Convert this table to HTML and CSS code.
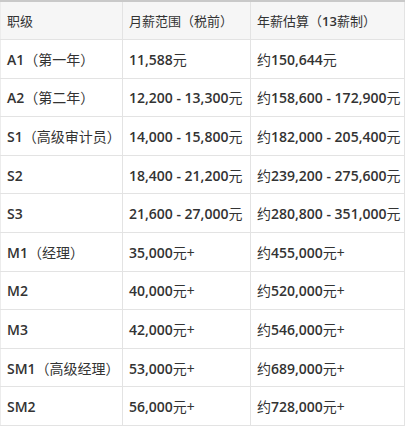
FILE: index.html
```html
<!DOCTYPE html>
<html lang="zh-CN">
<head>
<meta charset="utf-8">
<link rel="stylesheet" href="styles.css">
</head>
<body>
<table class="salary">
  <colgroup>
    <col class="c1"><col class="c2"><col class="c3">
  </colgroup>
  <thead>
    <tr><th>职级</th><th>月薪范围（税前）</th><th>年薪估算（<b>13</b>薪制）</th></tr>
  </thead>
  <tbody>
    <tr><td><b>A1</b>（第一年）</td><td><b>11,588</b>元</td><td>约<b>150,644</b>元</td></tr>
    <tr><td><b>A2</b>（第二年）</td><td><b>12,200 - 13,300</b>元</td><td>约<b>158,600 - 172,900</b>元</td></tr>
    <tr><td><b>S1</b>（高级审计员）</td><td><b>14,000 - 15,800</b>元</td><td>约<b>182,000 - 205,400</b>元</td></tr>
    <tr><td><b>S2</b></td><td><b>18,400 - 21,200</b>元</td><td>约<b>239,200 - 275,600</b>元</td></tr>
    <tr><td><b>S3</b></td><td><b>21,600 - 27,000</b>元</td><td>约<b>280,800 - 351,000</b>元</td></tr>
    <tr><td><b>M1</b>（经理）</td><td><b>35,000</b>元+</td><td>约<b>455,000</b>元+</td></tr>
    <tr><td><b>M2</b></td><td><b>40,000</b>元+</td><td>约<b>520,000</b>元+</td></tr>
    <tr><td><b>M3</b></td><td><b>42,000</b>元+</td><td>约<b>546,000</b>元+</td></tr>
    <tr><td><b>SM1</b>（高级经理）</td><td><b>53,000</b>元+</td><td>约<b>689,000</b>元+</td></tr>
    <tr><td><b>SM2</b></td><td><b>56,000</b>元+</td><td>约<b>728,000</b>元+</td></tr>
  </tbody>
</table>
</body>
</html>
```

FILE: styles.css
```css
html, body {
  margin: 0;
  padding: 0;
  background: #ffffff;
}

.salary {
  border-collapse: collapse;
  table-layout: fixed;
  width: 404px;
  font-family: "Noto Sans CJK SC", "Noto Sans", sans-serif;
  color: #333333;
  border-top: 2px solid #c9c9c9;
}

.c1 { width: 122px; }
.c2 { width: 128px; }
.c3 { width: 154px; }

.salary th,
.salary td {
  border: 1px solid #e3e3e3;
  padding: 0 0 0 6px;
  text-align: left;
  white-space: nowrap;
  overflow: hidden;
  vertical-align: middle;
}

.salary th {
  height: 37px;
  background: #f6f6f6;
  font-size: 13px;
  font-weight: 400;
  border-top: none;
}

.salary td {
  height: 37.6px;
  font-size: 14px;
  font-weight: 400;
}

.salary tr > :first-child { border-left: 1px solid #ececec; }

.salary b {
  font-family: "Open Sans", "Noto Sans", sans-serif;
  font-weight: 600;
}
```
